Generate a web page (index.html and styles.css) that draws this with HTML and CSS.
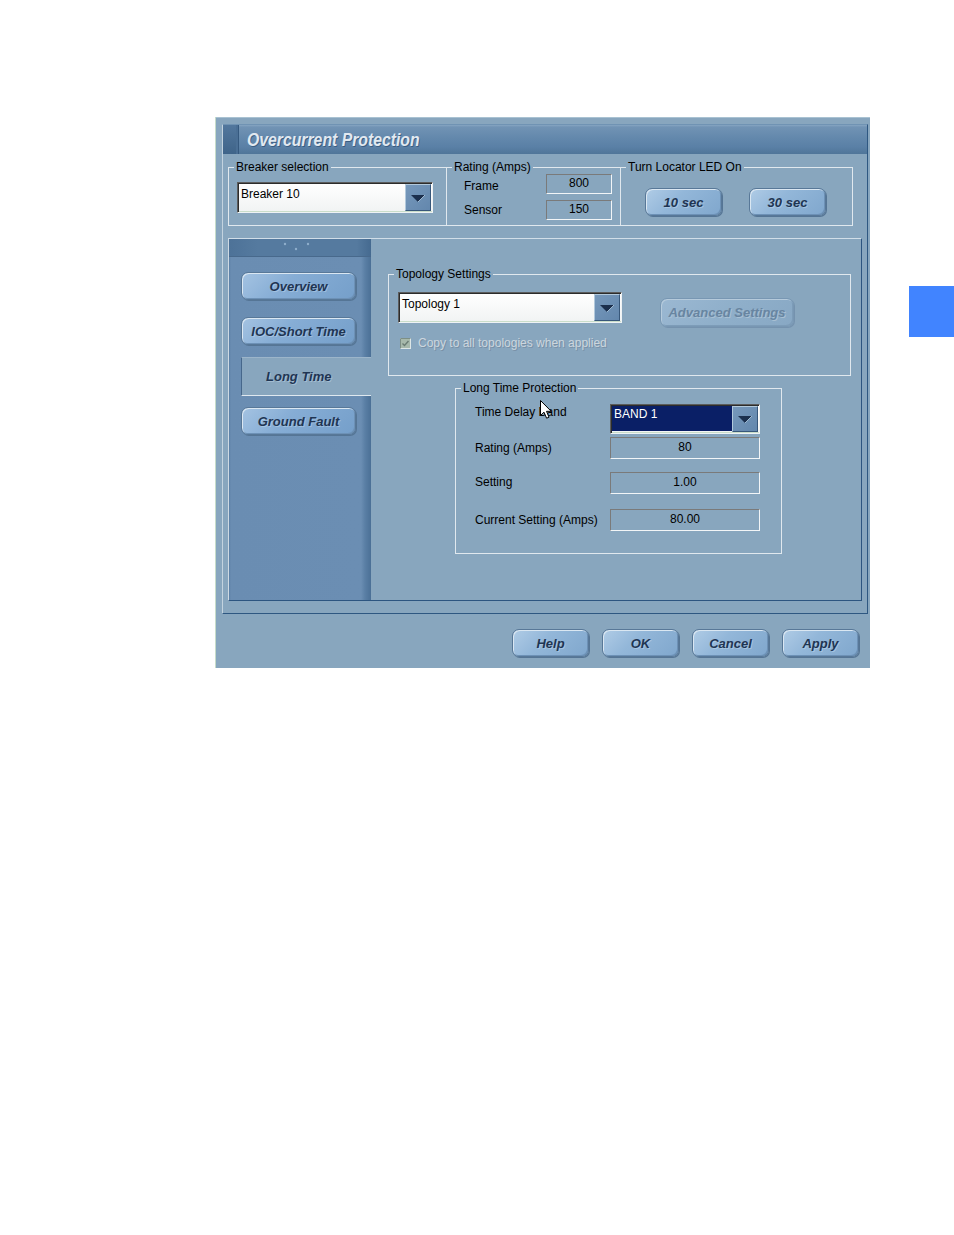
FILE: index.html
```html
<!DOCTYPE html>
<html>
<head>
<meta charset="utf-8">
<title>Overcurrent Protection</title>
<link rel="stylesheet" href="styles.css">
</head>
<body>
<div class="page">
  <div class="dialog">
    <div class="frame">
      <div class="titlebar">
        <div class="title-block"></div>
        <span class="title">Overcurrent Protection</span>
      </div>

      <div class="top-groups">
        <fieldset class="grp grp-breaker">
          <legend>Breaker selection</legend>
          <div class="combo combo-breaker">
            <span class="combo-text">Breaker 10</span>
            <span class="combo-btn"><svg width="18" height="10" viewBox="0 0 18 10"><path d="M2 1 H16 L9 8 Z" fill="#1b2f4d"/><path d="M16 1 L9 8" stroke="#9fb9d0" stroke-width="1"/></svg></span>
          </div>
        </fieldset>
        <fieldset class="grp grp-rating">
          <legend>Rating (Amps)</legend>
          <div class="rating-grid">
            <span class="lbl lbl-frame">Frame</span><span class="field">800</span>
            <span class="lbl">Sensor</span><span class="field">150</span>
          </div>
        </fieldset>
        <fieldset class="grp grp-locator">
          <legend>Turn Locator LED On</legend>
          <div class="locator-row">
            <button class="btn btn-led">10 sec</button>
            <button class="btn btn-led">30 sec</button>
          </div>
        </fieldset>
      </div>

      <div class="panel">
        <div class="sidebar">
          <div class="side-head">
            <svg width="30" height="10" viewBox="0 0 30 10"><circle cx="3" cy="3" r="1.2" fill="#8eaecb"/><circle cx="14" cy="8" r="1.2" fill="#8eaecb"/><circle cx="26" cy="3" r="1.2" fill="#8eaecb"/></svg>
          </div>
          <div class="side-nav">
            <button class="btn tab-btn nav-first">Overview</button>
            <button class="btn tab-btn nav-second">IOC/Short Time</button>
            <div class="tab-active"><span>Long Time</span></div>
            <button class="btn tab-btn nav-last">Ground Fault</button>
          </div>
        </div>

        <div class="content">
          <fieldset class="grp grp-topo">
            <legend>Topology Settings</legend>
            <div class="topo-row">
              <div class="combo combo-topo">
                <span class="combo-text">Topology 1</span>
                <span class="combo-btn"><svg width="18" height="10" viewBox="0 0 18 10"><path d="M2 1 H16 L9 8 Z" fill="#1b2f4d"/><path d="M16 1 L9 8" stroke="#9fb9d0" stroke-width="1"/></svg></span>
              </div>
              <button class="btn btn-adv" disabled>Advanced Settings</button>
            </div>
            <div class="check-row">
              <svg class="checkbox" width="11" height="11" viewBox="0 0 11 11"><rect x="0.5" y="0.5" width="10" height="10" fill="#a7b9ab" stroke="#dde6e6"/><path d="M0.5 10.5 V0.5 H10.5" fill="none" stroke="#7d8f86"/><path d="M2.5 5.5 L4.5 7.5 L8.5 3" fill="none" stroke="#6b7d74" stroke-width="1.4"/></svg>
              <span class="check-label">Copy to all topologies when applied</span>
            </div>
          </fieldset>

          <fieldset class="grp grp-long">
            <legend>Long Time Protection</legend>
            <div class="lt-rows">
              <div class="lt-row lt-row-combo">
                <span class="lt-lbl lt-lbl-top">Time Delay Band</span>
                <div class="combo combo-band">
                  <span class="combo-text band-text">BAND 1</span>
                  <span class="combo-btn"><svg width="18" height="10" viewBox="0 0 18 10"><path d="M2 1 H16 L9 8 Z" fill="#1b2f4d"/><path d="M16 1 L9 8" stroke="#9fb9d0" stroke-width="1"/></svg></span>
                </div>
                <svg class="cursor" width="13" height="20" viewBox="0 0 13 20"><path d="M0.5 0.5 L0.5 15.5 L4 12.2 L6.6 18.2 L9 17.2 L6.5 11.3 L11.2 11.3 Z" fill="#ffffff" stroke="#000000" stroke-width="1"/></svg>
              </div>
              <div class="lt-row lt-gap-1">
                <span class="lt-lbl">Rating (Amps)</span>
                <span class="field field-lt">80</span>
              </div>
              <div class="lt-row lt-gap-2">
                <span class="lt-lbl lt-lbl-up">Setting</span>
                <span class="field field-lt">1.00</span>
              </div>
              <div class="lt-row lt-gap-3">
                <span class="lt-lbl">Current Setting (Amps)</span>
                <span class="field field-lt">80.00</span>
              </div>
            </div>
          </fieldset>
        </div>
      </div>
    </div>

    <div class="actions">
      <button class="btn btn-act">Help</button>
      <button class="btn btn-act">OK</button>
      <button class="btn btn-act">Cancel</button>
      <button class="btn btn-act">Apply</button>
    </div>
  </div>
  <div class="thumb"></div>
</div>
</body>
</html>
```

FILE: styles.css
```css
html, body {
  margin: 0;
  padding: 0;
  background: #ffffff;
}

body {
  font-family: "Liberation Sans", Arial, sans-serif;
  font-size: 12px;
  color: #000000;
}

.page {
  display: flex;
  align-items: flex-start;
  padding: 117px 0 0 215px;
}

.dialog {
  flex: none;
  width: 655px;
  height: 551px;
  box-sizing: border-box;
  padding: 7px 2px 0 7px;
  background: #88a6be;
  box-shadow: inset 1px 0 0 #c6dcca, inset 0 1px 0 #a9c2d2;
  display: flex;
  flex-direction: column;
}

.frame {
  height: 490px;
  box-sizing: border-box;
  border: 1px solid;
  border-color: #7093b3 #2e5781 #2e5781 #c3d3df;
  display: flex;
  flex-direction: column;
}

/* title bar */
.titlebar {
  height: 29px;
  flex: none;
  display: flex;
  align-items: center;
  background: linear-gradient(#86a6c2 0, #7193b4 2px, #6388ac 45%, #5a80a6 75%, #4f7599 100%);
}

.title-block {
  width: 16px;
  align-self: stretch;
  background: linear-gradient(#52779d, #3f6489);
  box-shadow: inset -1px 0 0 #35597f, inset -3px 0 0 #4a6f95;
}

.title {
  display: inline-block;
  margin-left: 8px;
  font: italic bold 19px "Liberation Sans", Arial, sans-serif;
  color: #e1e9f1;
  text-shadow: 1px 1px 0 #3a5d82;
  transform: scaleX(0.83);
  transform-origin: left center;
  white-space: nowrap;
}

/* group boxes */
.top-groups {
  display: flex;
  margin: 6px 0 0 5px;
}

.grp {
  margin: 0;
  padding: 0;
  min-width: 0;
  box-sizing: border-box;
  border: 1px solid #e0e8ee;
}

.grp legend {
  margin-left: 5px;
  padding: 0 2px;
  font-size: 12px;
  line-height: 14px;
  color: #000000;
}

.grp-breaker { width: 219px; height: 66px; }
.grp-rating  { width: 175px; height: 66px; margin-left: -1px; }
.grp-locator { width: 233px; height: 66px; margin-left: -1px; }

/* combo box */
.combo {
  display: flex;
  box-sizing: border-box;
  border: 1px solid;
  border-color: #5c5c5c #eef2f4 #eef2f4 #5c5c5c;
  box-shadow: inset 1px 1px 0 #2c2c2c, inset 0 -1px 0 #c9ddc9;
  background: linear-gradient(#ffffff, #f1f3f3);
}

.combo-text {
  flex: 1;
  padding: 4px 0 0 3px;
  line-height: 14px;
  white-space: nowrap;
}

.combo-btn {
  flex: none;
  width: 26px;
  box-sizing: border-box;
  margin: 1px 1px 1px 0;
  background: linear-gradient(135deg, #7698bb, #6387ad);
  border: 1px solid;
  border-color: #b2c9dc #37577a #37577a #b2c9dc;
  display: flex;
  align-items: center;
  justify-content: center;
}

.combo-btn svg { display: block; margin-top: 2px; }

.combo-breaker {
  width: 196px;
  height: 31px;
  margin: 8px 0 0 8px;
}

/* rating */
.rating-grid {
  display: grid;
  grid-template-columns: 82px 66px;
  grid-auto-rows: 20px;
  row-gap: 6px;
  align-items: center;
  padding-left: 17px;
}

.lbl { line-height: 14px; white-space: nowrap; }
.lbl-frame { margin-top: 3px; }

.field {
  box-sizing: border-box;
  height: 20px;
  border: 1px solid;
  border-color: #7a7a7a #f2f5f7 #f2f5f7 #7a7a7a;
  text-align: center;
  line-height: 17px;
}

/* buttons */
.btn {
  box-sizing: border-box;
  padding: 0;
  margin: 0;
  font: italic bold 13px "Liberation Sans", Arial, sans-serif;
  color: #1f3553;
  border: 1px solid #587898;
  border-radius: 7px;
  background: linear-gradient(135deg, #b0cce6 0%, #93b7d9 40%, #80a7cd 100%);
  box-shadow: inset 1px 1px 0 #dae7f2, inset -1px -1px 0 #6d91b6, 1px 1px 0 #557595;
  text-shadow: 1px 1px 0 rgba(220, 235, 248, 0.35);
  white-space: nowrap;
  cursor: default;
}

.locator-row {
  display: flex;
  gap: 27px;
  padding: 14px 0 0 24px;
}

.btn-led {
  width: 77px;
  height: 28px;
}

/* main panel */
.panel {
  flex: none;
  display: flex;
  width: 634px;
  height: 363px;
  box-sizing: border-box;
  margin: 12px 0 0 5px;
  border: 1px solid;
  border-color: #d1dee8 #2d5580 #2d5580 #cdd9e3;
}

.sidebar {
  flex: none;
  width: 142px;
  background: linear-gradient(to right, #5c80a6 0, #6a8db2 2px, #6b8eb3 132px, #5a7fa5 136px, #4b7096 142px);
}

.side-head {
  height: 18px;
  box-sizing: border-box;
  background: linear-gradient(to right, #4d7298, #557a9f 20%, #557a9f 90%, #456a90);
  border-bottom: 1px solid #48698c;
  display: flex;
  justify-content: center;
}

.side-head svg { display: block; margin: 2px 0 0 -6px; }

.side-nav {
  display: flex;
  flex-direction: column;
  align-items: flex-start;
  padding-left: 12px;
}

.tab-btn {
  width: 115px;
  height: 28px;
  background: linear-gradient(135deg, #a4c3e2 0%, #86add5 40%, #759fca 100%);
}

.nav-first  { margin-top: 15px; }
.nav-second { margin-top: 17px; }
.nav-last   { margin-top: 11px; }

.tab-active {
  margin-top: 12px;
  width: 130px;
  height: 39px;
  box-sizing: border-box;
  background: #88a6be;
  border-top: 1px solid #9cb5ca;
  border-left: 1px solid #46678b;
  border-bottom: 1px solid #dfe8ef;
  display: flex;
  align-items: center;
  padding-left: 24px;
  font: italic bold 13px "Liberation Sans", Arial, sans-serif;
  color: #1f3553;
  text-shadow: 1px 1px 0 rgba(220, 235, 248, 0.35);
}

.content {
  flex: 1;
  min-width: 0;
}

/* topology */
.grp-topo {
  width: 463px;
  height: 109px;
  margin: 28px 0 0 17px;
}

.topo-row {
  display: flex;
  align-items: flex-start;
  padding: 11px 0 0 9px;
}

.combo-topo {
  width: 224px;
  height: 31px;
}

.btn-adv {
  width: 134px;
  height: 29px;
  margin: 6px 0 0 38px;
  color: #6885a1;
  border-color: #7897b3;
  background: linear-gradient(135deg, #9bb8d2 0%, #8fafca 50%, #88a8c4 100%);
  box-shadow: inset 1px 1px 0 #b6cbdc, inset -1px -1px 0 #7d9cb8, 1px 1px 0 #7592ae;
  text-shadow: 1px 1px 0 #a9c0d3;
}

.check-row {
  display: flex;
  align-items: center;
  height: 14px;
  margin-top: 9px;
  padding-left: 11px;
}

.checkbox { display: block; flex: none; }

.check-label {
  margin-left: 7px;
  color: #ccd6de;
  text-shadow: 1px 1px 0 #7890a6;
  line-height: 14px;
  white-space: nowrap;
}

/* long time */
.grp-long {
  width: 327px;
  height: 173px;
  margin: 5px 0 0 84px;
}

.lt-rows {
  padding: 9px 0 0 19px;
}

.lt-row {
  display: flex;
  align-items: center;
}

.lt-row-combo {
  position: relative;
  align-items: flex-start;
}

.lt-lbl {
  flex: none;
  width: 135px;
  line-height: 14px;
  white-space: nowrap;
}

.lt-lbl-top { margin-top: 1px; }
.lt-lbl-up { margin-top: -3px; }

.combo-band {
  width: 150px;
  height: 30px;
}

.band-text {
  margin: 1px 0 2px 1px;
  padding: 1px 0 0 2px;
  background: #0a1f66;
  color: #ffffff;
}

.field-lt {
  width: 150px;
  height: 22px;
  line-height: 19px;
}

.lt-gap-1 { margin-top: 3px; }
.lt-gap-2 { margin-top: 13px; }
.lt-gap-3 { margin-top: 15px; }

.cursor {
  position: absolute;
  left: 65px;
  top: -4px;
  display: block;
}

/* bottom buttons */
.actions {
  display: flex;
  justify-content: flex-end;
  gap: 13px;
  margin-top: 15px;
  padding-right: 9px;
}

.btn-act {
  width: 77px;
  height: 28px;
}

/* side thumb tab */
.thumb {
  flex: none;
  width: 45px;
  height: 51px;
  margin: 169px 0 0 39px;
  background: #4184ff;
}
```
